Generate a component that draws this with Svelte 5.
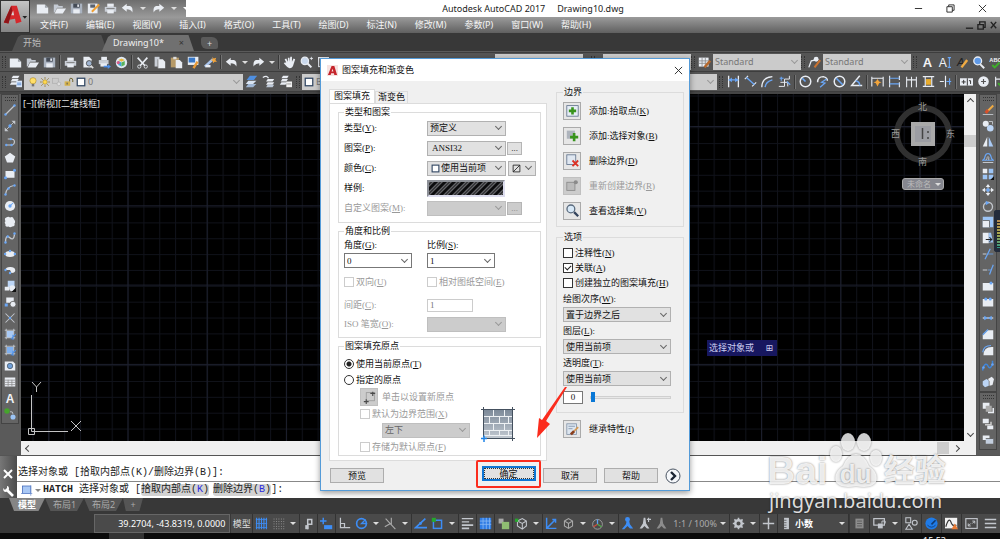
<script lang="ts">
    const W = "#e9edf3"
    const B = "#6aa6f5"
    const G = "#c3c7cd"
    const line = (d: string, c = G, w = 1.4) => `<path d="${d}" fill="none" stroke="${c}" stroke-width="${w}"/>`
    const fill = (d: string, c = W) => `<path d="${d}" fill="${c}"/>`
    const dot = (x: number, y: number, r = 1.6, c = B) => `<circle cx="${x}" cy="${y}" r="${r}" fill="${c}"/>`
    const rect = (x: number, y: number, w: number, h: number, c = W) => `<rect x="${x}" y="${y}" width="${w}" height="${h}" fill="${c}"/>`

    const icons: Record<string, string> = {
        new: fill("M1 3H11L15 7V14H1Z") + fill("M11 3V7H15Z", "#9ea3aa"),
        open: fill("M1 3H6L7 5H12V7H5L2 13H1Z", "#c5cbd4") + fill("M5 8H16L12 14H2Z"),
        save: fill("M1 2H15V14H1Z", "#aab3c0") + rect(4, 2, 8, 5, "#454c57") + rect(4, 9, 8, 5) + rect(9, 3, 2, 3),
        saveas: fill("M1 2H13V14H1Z") + rect(4, 3, 6, 4, "#596270") + line("M6 12L15 3", "#f0a032", 2.4),
        print: rect(4, 2, 8, 4) + fill("M1 6H15V12H1Z", "#c9ced6") + rect(4, 10, 8, 4) + line("M3 8H13", "#777", 1),
        preview: fill("M3 1H10L13 4V14H3Z") + `<circle cx="10" cy="9" r="3.4" fill="#9fb4d0" stroke="#444"/>` + line("M12 12L15 15", "#ddd", 2),
        publish: rect(4, 1, 7, 4) + fill("M1 5H13V10H1Z", "#c9ced6") + rect(3, 9, 8, 4) + line("M7 13H13", "#4d8fe8", 2) + fill("M12 10L16 13L12 16Z", "#4d8fe8"),
        cube: `<circle cx="8" cy="8" r="7" fill="#dfe8f2"/>` + fill("M8 3L12 5L8 7L4 5Z", "#e8b93f") + fill("M4 6L8 8V13L4 11Z", "#3fa7d8") + fill("M12 6L8 8V13L12 11Z", "#58b45a") + dot(4, 8, 2, "#d85c8a"),
        cut: line("M2 2L11 12M14 2L5 12", W, 2) + `<circle cx="4" cy="13" r="2" fill="none" stroke="${W}"/><circle cx="12" cy="13" r="2" fill="none" stroke="${W}"/>`,
        copy: fill("M2 1H8V13H2Z", "#c9ced6") + fill("M6 4H12L15 7V15H6Z") + line("M6 4V15", "#777", 1),
        paste: rect(1, 2, 10, 12, "#b69a68") + rect(4, 1, 4, 3, "#ddd") + fill("M7 5H12L15 8V15H7Z"),
        match: rect(1, 1, 13, 10) + rect(2, 2, 8, 6, "#3978c8") + line("M13 7L8 15", "#e79a37", 3),
        block: line("M1 13L11 4", "#a9c5ee", 3) + fill("M10 1L12 3L15 2L14 5L16 7L13 7L11 9L11 6L8 5L11 4Z", "#f3a53b") + rect(2, 11, 6, 3),
        undo: fill("M1 7L7 2V5H11Q15 6 14 13Q12 9 7 9V12Z"),
        redo: fill("M15 7L9 2V5H5Q1 6 2 13Q4 9 9 9V12Z"),
        hand: fill("M4 8L2 4L4 3L6 7V2H8V7L9 1H11L11 7L13 3L15 4L13 10Q12 15 8 15Q6 15 1 9L2 8Z"),
        zoom: `<circle cx="6" cy="6" r="4.5" fill="#c9d8ec" stroke="${W}" stroke-width="1.5"/>` + line("M9 9L14 14", W, 2.6) + line("M12 3H16M14 1V5", W, 1),
        window: `<rect x="2" y="2" width="12" height="11" fill="none" stroke="${W}" stroke-width="1.5"/>`,
        layers: fill("M5 1H13L11 4H3Z") + fill("M4 5H12L10 8H2Z") + fill("M3 9H11L9 12H1Z") + rect(9, 7, 7, 8, "#d8e6fa") + line("M10 10H15M10 12H15", "#4c80c8", 1),
        layer1: fill("M6 1H15L11 6H2Z", "#4f8fe0") + fill("M4 7H14L10 11H1Z", "#d9e4f2") + fill("M4 11H14L10 15H1Z", "#9fb6d4"),
        layer2: fill("M7 5H15L13 8H5Z") + fill("M7 9H15L13 12H5Z") + fill("M7 12H15L13 15H5Z", "#bcc7d6") + line("M1 3Q6 0 8 4", W, 1.6),
        layer3: fill("M5 1H12L10 4H3Z") + fill("M4 5H11L9 8H2Z") + fill("M3 9H10L8 12H1Z") + rect(9, 8, 7, 7, "#f2f2f2") + line("M10 11H15", "#888", 1),
        bulb: `<circle cx="8" cy="6" r="5" fill="#ffdf69" stroke="#a07a10" stroke-width=".8"/>` + rect(6, 11, 4, 4, "#777"),
        sun: `<circle cx="8" cy="8" r="3.6" fill="#ffd84f" stroke="#9d7a14" stroke-width=".8"/>` + line("M8 0V3M8 13V16M0 8H3M13 8H16M2 2L4.5 4.5M11.5 11.5L14 14M14 2L11.5 4.5M4.5 11.5L2 14", "#8b7331", 1.2),
        vpfreeze: `<rect x="1" y="2" width="9" height="8" fill="none" stroke="#aaa"/><circle cx="11" cy="11" r="3" fill="#ddd" stroke="#aaa"/>`,
        lock: rect(1, 7, 9, 7, "#d5b24c") + line("M9 7V4Q9 2 11 2Q14 2 14 5V8", "#6f6531", 1.6) + line("M5 9V12", "#555", 1.6),
        square: `<rect x="2" y="2" width="12" height="12" fill="#fff" stroke="#324763" stroke-width="2"/>`,
        tablestyle: rect(1, 2, 12, 11) + line("M1 6H13M1 9H13M5 2V13M9 2V13", "#888", 1) + line("M15 6L8 14", "#b5682c", 3),
        mlstyle: line("M1 14L4 6L9 5", W, 1.6) + dot(10, 4, 3, W) + line("M15 5L8 14", "#c9722f", 2.6),
        bigA: `<text x="8" y="14" text-anchor="middle" font-family="Liberation Sans" font-weight="700" font-size="16" fill="#f1f3f6">A</text>`,
        textI: `<text x="6" y="14" text-anchor="middle" font-family="Liberation Sans" font-size="15" fill="#f1f3f6">A</text>` + line("M12 2H16M14 2V14M12 14H16", B),
        textEdit: `<text x="7" y="12" text-anchor="middle" font-family="Liberation Sans" font-style="italic" font-size="14" fill="#222">A</text>` + line("M15 5L8 14", "#f0ab43", 3),
        find: `<circle cx="7" cy="6" r="4.8" fill="#5f9ae8" stroke="${W}" stroke-width="1.6"/>` + line("M10 10L15 15", W, 2.4),
        abc: `<text x="8" y="7" text-anchor="middle" font-family="Liberation Sans" font-weight="700" font-size="7" fill="#f1f3f6">ABC</text>` + line("M4 11L7 14L13 8", "#3fae29", 2.4),
        dimlin: line("M2 1V15M14 1V15", W, 1.6) + line("M2 6H14", B, 1.6) + fill("M2 6L6 3V9ZM14 6L10 3V9Z", B),
        dimali: line("M1 5L5 1M10 14L15 9", W) + line("M3 3L13 12", B, 1.8),
        dimarc: line("M1 15Q1 3 14 2", W, 1.6) + line("M5 15Q6 8 14 6", B, 1.8),
        dimord: line("M1 14H8V5H14V1M3 9H12V14", W, 1.2) + line("M4 2V7M2 4H7M11 8L15 12", B, 1.4),
        dimrad: `<circle cx="8" cy="8" r="6.5" fill="none" stroke="${W}" stroke-width="1.8"/>` + line("M4 4L8 8", B, 2),
        dimjog: line("M2 9Q2 2 9 2Q14 3 14 7", W, 1.8) + line("M13 5L7 9L11 10L5 15", B, 1.6),
        dimdia: `<circle cx="8" cy="8" r="6.5" fill="none" stroke="${W}" stroke-width="1.8"/>` + line("M4 4L12 12", B, 2),
        dimang: line("M12 1L2 13H15", W, 1.8) + line("M7 7Q12 8 12 13", B, 1.8),
        qdim: line("M1 2V14M15 2V14M1 4H15", W, 1.4) + fill("M8 5L10 8L13 9L10 10L8 14L6 10L3 9L6 8Z", "#f3a53b"),
        dimbase: line("M2 1V15M14 1V6M14 9V15", W, 1.4) + line("M2 4H14M2 11H14", B, 1.5),
        dimcont: line("M2 2V15M8 2V15M14 2V15M2 6H14", W, 1.3),
        dimspace: line("M1 2H15M1 14H15M4 2V14M12 2V14", W, 1.4) + rect(5, 5, 6, 7, "#e9ad2d"),
        dimbreak: line("M8 1V15M1 8H6", W, 1.4) + line("M9 8H15M13 4V12", B, 1.4),
        tol: rect(0, 4, 16, 9) + line("M2 8.500H7M4.500 6V11M9 4V13M11 7H13V11", "#333", 1.2),
        center: `<circle cx="8" cy="8" r="6.5" fill="${W}"/>` + line("M8 5V11M5 8H11", "#555", 1.4),
        check: line("M2 2V14M2 5H12", W) + line("M5 10L8 13L14 7", "#3fae29", 2.2),
        line: line("M2 14L14 2", G, 1.6) + dot(2, 14) + dot(14, 2),
        xline: line("M2 14L14 2", G, 1.2) + dot(8, 8, 2.2) + fill("M10 1H15V6ZM1 10V15H6Z", G),
        pline: line("M3 12H11Q14 11 14 8Q14 4 9 4H5", G, 1.6) + dot(3, 12) + dot(10, 12) + dot(9, 4),
        polygon: fill("M8 1L15 6L12 14H4L1 6Z"),
        rectang: rect(2, 4, 12, 9) + dot(2, 13, 2) + dot(14, 3, 2),
        arc: line("M2 14Q3 4 13 2", G, 1.6) + dot(2, 14) + dot(6, 6) + dot(14, 2),
        circle: `<circle cx="8" cy="8" r="6.8" fill="${W}"/>` + dot(8, 8, 2.2) + line("M8 8L12 4", B),
        revcloud: `<path d="M3 2Q6 0 8 2Q12 0 13 4Q16 7 14 10Q15 14 11 14Q8 16 6 14Q1 15 2 11Q0 8 2 7Q0 3 3 2Z" fill="${W}"/>`,
        spline: line("M2 14Q2 3 7 7Q13 13 14 3", G, 1.8) + dot(2, 14) + dot(5, 6) + dot(14, 2),
        ellipse: `<ellipse cx="8" cy="8" rx="6.5" ry="4" fill="${W}"/>` + dot(1.5, 8) + dot(14.5, 8) + dot(8, 4),
        elarc: `<path d="M2 8A6.500 4 0 1 1 10 12L8 8Z" fill="${W}"/>` + dot(2, 8) + dot(8, 12),
        insert: rect(5, 1, 9, 9, "#bcd5f5") + `<circle cx="11" cy="11" r="4" fill="${W}"/>` + rect(1, 9, 6, 5) + fill("M16 10V16H10Z", "#111"),
        makeblock: rect(3, 2, 10, 7) + `<circle cx="12" cy="11" r="4" fill="${W}" stroke="#555"/>` + rect(1, 10, 4, 4, B),
        point: line("M2 2L14 14M14 2L2 14", G, 1.4) + dot(8, 8, 1.6),
        hatch: rect(4, 4, 9, 9, "#a9caf5") + line("M3 1V15M1 3H15M13 1V15M1 13H15", G, 1.2) + line("M9 15L16 8M12 9V16", "#4c8fe8", 1.4),
        gradient: rect(4, 4, 9, 9, "#7fb0ef") + line("M3 1V15M1 3H15M13 1V15M1 13H15", G, 1.2) + line("M9 15L16 8M12 9V16", "#4c8fe8", 1.4),
        region: fill("M1 2H12L15 5V14H1Z") + `<circle cx="8" cy="8" r="3.6" fill="#6f9fd8" stroke="#456"/>`,
        table: rect(1, 2, 14, 12) + line("M1 5.500H15M1 8.500H15M1 11.500H15M5.500 5V14M10.500 5V14", "#888", 1),
        addsel: dot(4, 4, 3.6, "#45a52c") + dot(12, 12, 3.4, "#9cc4f5") + line("M8 5Q12 4 12 8", G, 1.2),
        erase: line("M15 2L8 9", "#f0ab43", 2.6) + line("M8 8L5 12", "#d6502b", 4) + line("M1 14H15", G, 1.2),
        copyobj: dot(5, 5, 4, W) + dot(11, 11, 4.4, "#bcd5f5") + line("M9 2H14V6", G, 1.2),
        mirror: fill("M7 1V14H1Z") + fill("M9 1V14H15Z", "#a9caf5"),
        offset: line("M1 14H15", G) + line("M1 11Q4 9 4 6Q5 2 8 2Q11 2 12 6Q12 9 15 11Z", B, 1.6) + line("M5 11Q7 9 7 7Q8 5 9 7V11", G, 1.2),
        array: rect(1, 1, 6, 6) + rect(9, 1, 6, 6, "#9cc4f5") + rect(1, 9, 6, 6, "#9cc4f5") + rect(9, 9, 6, 6, "#9cc4f5") + fill("M16 11V16H11Z", "#111"),
        move: line("M8 2V14M2 8H14", G, 1.6) + fill("M8 0L11 4H5ZM8 16L5 12H11ZM0 8L4 5V11ZM16 8L12 5V11Z") + rect(6, 6, 4, 4, B),
        rotate: `<circle cx="8" cy="9" r="6" fill="none" stroke="${G}" stroke-width="1.8"/>` + fill("M5 1L10 4L5 7Z", B),
        scale: rect(1, 1, 14, 14, "#9cc4f5") + rect(1, 6, 9, 9) + line("M1 6H10V15", "#555", 1),
        stretch: rect(1, 1, 8, 14) + fill("M9 1H12L15 14H9Z", "#9cc4f5") + line("M5 10H13M10 7L13 10L10 13", "#222", 1.4),
        trim: line("M1 8H6", G) + line("M8 8H15", B, 1) + line("M4 15L11 1", B, 1.6),
        extend: line("M1 8H7", G) + line("M8 8H12", B, 1) + line("M10 14L15 1", B, 1.6),
        breakpt: rect(1, 4, 14, 10) + dot(12, 4, 2),
        brk: rect(1, 4, 14, 10) + dot(5, 4, 2) + dot(11, 4, 2),
        join: line("M1 8H15", G, 2) + fill("M3 5L8 8L3 11ZM13 5L8 8L13 11Z", B),
        chamfer: fill("M1 15V10L8 3H15V15Z") + line("M1 9L8 2", B, 1.6),
        fillet: fill("M2 15Q2 4 13 4H15V15Z") + line("M1 11Q2 2 12 2", B, 1.6),
        blend: line("M1 14V11Q5 2 8 8Q11 14 14 5V1", "#3f86dc", 2) + dot(2, 10) + dot(14, 6),
        explode: fill("M1 7L6 4L9 6V13L4 15L1 12Z", "#bcd5f5") + fill("M8 4L13 1L16 4L14 12L10 13V7Z"),
        order1: rect(1, 1, 9, 8) + rect(5, 5, 8, 8, "#aaa") + line("M8 14H15V8", W, 2),
        order2: rect(1, 1, 8, 6) + rect(7, 10, 8, 5) + line("M4 9H12V5", "#ccc", 2),
        order3: rect(1, 2, 9, 6) + rect(5, 6, 10, 7, "#c3cede") + line("M5 6H15", "#555", 1),
        grid: line("M2 1V15M5 1V15M8 1V15M11 1V15M14 1V15", "#3d8df5", 1.4) + line("M1 3H15M1 8H15M1 13H15", "#3d8df5", 1),
        snap: [2, 5, 8, 11, 14].map(x => [2, 5, 8, 11, 14].map(y => rect(x, y, 1, 1, "#aaa")).join("")).join(""),
        infer: line("M7 15V3H12V9H7", G, 1.8) + rect(4, 10, 4, 5, G),
        dyn: line("M4 1V9M0 5H8", "#3d8df5", 1.8) + rect(5, 10, 10, 5, "#3d8df5"),
        ortho: line("M3 1V13H15M3 8H8V13", G, 1.5),
        polar: `<circle cx="8" cy="8" r="6" fill="none" stroke="#3d8df5" stroke-width="2"/>` + line("M15 8H8L13 3", "#3d8df5", 1.6),
        iso: line("M2 2L14 15M9 1V9M1 12L8 8", "#aaa", 1.4),
        otrack: line("M14 2L2 13H16", "#3d8df5", 2) + dot(8, 8, 1.8, "#3d8df5"),
        osnap: `<rect x="3" y="4" width="10" height="10" fill="none" stroke="#3d8df5" stroke-width="1.8"/>` + rect(1, 1, 5, 5, "#25a72c"),
        lwt: line("M1 2H15M1 6H10", G, 1.8) + line("M1 10H15M1 14H10", G, 2.4),
        transp: rect(1, 1, 14, 14, "#2f7de5") + line("M1 5H15M1 9H15M5 1V15M9 1V15M13 1V15", "#88b7f3", 1),
        selcyc: rect(2, 2, 6, 6, "#a9a9a9") + rect(6, 6, 9, 9, "#8fbd72"),
        osnap3: line("M3 5L9 2L14 5V11L9 15L3 11ZM3 5L9 8L14 5M9 8V15", G, 1.3) + rect(0, 2, 4, 4, "#25a72c"),
        ucs: line("M2 1V14H14M2 14L12 4M9 3H13V7", "#3d8df5", 1.8),
        filter: line("M3 5L8 2L13 5V11L8 14L3 11ZM3 5L8 8L13 5M8 8V14", "#aaa", 1.3),
        gizmo: `<circle cx="8" cy="9" r="6" fill="none" stroke="#aaa"/>` + line("M8 9V3", "#5aa0f5", 1.6) + line("M8 9L3 12", "#d04c3c", 1.6) + line("M8 9L13 12", "#4fae45", 1.6),
        anno: fill("M7 5L10 5L11 9L15 14H11L8 11L4 15H1L6 9Z", "#3d8df5") + dot(8, 3, 3, "#3d8df5"),
        annoadd: fill("M7 1H9L10 8L14 14H11L8 11L5 14H2L6 8Z", G) + line("M11 3H16M13 1V6", G),
        annoscale: fill("M7 1H9L10 8L14 14H11L8 11L5 14H2L6 8Z", "#8c8c8c"),
        gear: `<circle cx="8" cy="8" r="4" fill="none" stroke="${G}" stroke-width="3"/>` + line("M8 1V4M8 12V15M1 8H4M12 8H15M3 3L5 5M11 11L13 13M13 3L11 5M5 11L3 13", G, 2),
        plus: line("M8 1V15M1 8H15", G, 1.8),
        units: rect(5, 1, 6, 14, G) + line("M5 4H8M5 7H8M5 10H8M5 13H8", "#555", 1),
        calc: rect(3, 2, 10, 12, "#8c8c8c") + line("M5 5H11M5 8H11M5 11H11", "#555", 1),
        uilock: `<rect x="1" y="2" width="13" height="8" fill="none" stroke="${G}" stroke-width="1.5"/>` + rect(6, 8, 6, 6, G) + line("M11 8V5H15V8", G, 1.2),
        isolate: line("M1 1H7V7H1ZM5 9L9 15H1Z", G, 1.3) + `<circle cx="12" cy="7" r="3" fill="none" stroke="${G}" stroke-width="1.4"/>`,
        perf: dot(8, 8, 7.5, "#1f7be8") + line("M8 9L13 4", "#103a70", 2) + line("M3 10Q8 15 13 10", "#103a70", 1),
        monitor: rect(0, 1, 15, 13, "#f2f2f2") + line("M1 12Q5 -2 8 8Q10 12 14 10", "#333", 1.4) + fill("M12 8L16 15H8Z", "#e87b35"),
        full: `<rect x="1" y="2" width="14" height="12" fill="none" stroke="${G}" stroke-width="1.4"/>` + line("M4 11L7 8M12 5L9 8M9 5H12V8M4 8V11H7", G, 1.2),
        menu: line("M1 3H15M1 8H15M1 13H15", G, 1.8),
        pick: `<rect x="1" y="2" width="14" height="13" fill="#e6edf6" stroke="#5d6f88"/>` + line("M8 4V13M3.500 8.500H12.500", "#38941c", 3.2),
        addobj: rect(1, 2, 10, 10, "#aeb4bd") + line("M10 5V15M5 10H15", "#38941c", 3.2),
        remove: `<rect x="1" y="1" width="11" height="12" fill="#dfe7f1" stroke="#5d6f88"/>` + line("M8 8L15 15M15 8L8 15", "#dd3124", 2.2),
        recreate: `<rect x="1" y="4" width="10" height="10" fill="#bbb" stroke="#888"/>` + dot(12, 4, 2.6, "#8b8b8b"),
        view: `<circle cx="6" cy="6" r="4.8" fill="#d7e8f7" stroke="#596a7d" stroke-width="1.6"/>` + line("M10 10L15 15", "#33435c", 2.8),
        inherit: `<rect x="1" y="1" width="12" height="13" fill="#dde6f0" stroke="#8191a6"/>` + line("M3 4H11M3 7H8", "#7b8fa8", 1) + line("M15 5L10 10", "#d59a54", 2) + line("M10 10L6 14", "#8a3e1c", 3.4),
        origin: `<rect x="4" y="2" width="10" height="10" fill="none" stroke="#999"/>` + line("M1 13H7M4 10V16M12 1V6M9 3H15", "#4a4a4a", 1.4),
        hatchcmd: `<rect x="2" y="2" width="11" height="10" fill="#a9c8f5" stroke="#3e66b8"/>` + line("M0 12H15M13 1V15", "#6d8fd0", 1),
    }

    const menus = ["文件(F)", "编辑(E)", "视图(V)", "插入(I)", "格式(O)", "工具(T)", "绘图(D)", "标注(N)", "修改(M)", "参数(P)", "窗口(W)", "帮助(H)"]
    const quick = "new open save saveas print undo v redo v".split(" ")
    const standard = "new open save | print preview publish cube | cut copy paste match block | undo v redo v | hand zoom window".split(" ")
    const dims = "dimlin dimali dimarc dimord | dimrad dimjog dimdia dimang | qdim dimbase dimcont dimspace dimbreak | tol center check".split(" ")
    const draw = "line xline pline polygon rectang arc circle revcloud spline ellipse elarc insert makeblock point hatch gradient region table bigA addsel".split(" ")
    const modify = "erase copyobj mirror offset array move rotate scale stretch trim extend breakpt brk join chamfer fillet blend explode".split(" ")
    const status1 = "grid snap v | infer | dyn | ortho polar v iso v | otrack osnap v | lwt | transp | selcyc | osnap3 v | ucs filter v gizmo v | anno annoadd annoscale".split(" ")
    const status2 = "calc | uilock v | isolate | perf | monitor | full menu".split(" ")

    let tab = $state("hatch")
    let origin = $state("current")
    let associative = $state(true)
    let opacity = $state(0)
</script>

{#snippet icon(name: string)}
    <svg class="icon" viewBox="0 0 16 16" aria-hidden="true">{@html icons[name]}</svg>
{/snippet}

{#snippet tools(names: string[])}
    {#each names as name}
        {#if name === "|"}
            <span class="sep"></span>
        {:else if name === "v"}
            <span class="caret"></span>
        {:else}
            <button class="tool" aria-label={name}>{@render icon(name)}</button>
        {/if}
    {/each}
{/snippet}

{#snippet combo(id: string, value: string, disabled = false)}
    <span class="combo" class:disabled>
        <select {id} {disabled} aria-label={id}><option>{value}</option></select>
    </span>
{/snippet}

{#snippet key(text: string, letter: string, end = "")}
    {text}(<u>{letter}</u>){end}
{/snippet}

<div class="app">
    <header>
        <button class="logo" aria-label="AutoCAD">
            <svg viewBox="0 0 30 30">
                <path d="M3 21L11 3H17L22 20L16 22L15 17L9 18L8 22Z" fill="#d5282c" />
                <path d="M3 21L11 3L12 8L8 22Z" fill="#8f1418" />
                <path d="M11 13L13 8L14 13Z" fill="#d8d8d8" />
                <path d="M23 14H28L25.500 17Z" fill="#222" />
            </svg>
        </button>
        <div class="titlebar">
            <div class="quick">
                {@render tools(quick)}
                <span class="caret bar"></span>
            </div>
            <span class="apptitle"><span>Autodesk AutoCAD 2017</span><span>Drawing10.dwg</span></span>
            <div class="winbuttons">
                <button aria-label="minimize"><svg viewBox="0 0 10 10"><path d="M1 5H9" /></svg></button>
                <button aria-label="restore"><svg viewBox="0 0 10 10"><path d="M1 3H7V9H1ZM3 3V1H9V7H7" /></svg></button>
                <button aria-label="close"><svg viewBox="0 0 10 10"><path d="M1 1L9 9M9 1L1 9" /></svg></button>
            </div>
        </div>
        <nav>
            {#each menus as menu}
                <a href="#menu">{menu}</a>
            {/each}
            <div class="docbuttons">
                <button aria-label="minimize drawing"><svg viewBox="0 0 10 10"><path d="M1 8H9" /></svg></button>
                <button aria-label="restore drawing"><svg viewBox="0 0 10 10"><path d="M1 4H7V9H1ZM3 4V1H9V7H7" /></svg></button>
                <button aria-label="close drawing"><svg viewBox="0 0 10 10"><path d="M2 1L8 8M8 1L2 8" /></svg></button>
            </div>
        </nav>
    </header>

    <div class="filetabs">
        <button class="filetab">开始</button>
        <button class="filetab current">Drawing10* <i>×</i></button>
        <button class="addtab">+</button>
    </div>

    <div class="toolbar">
        <span class="grip"></span>
        {@render tools(standard)}
        <span class="space"></span>
        <span class="pale w88">{@render combo("textstyle", "Standard")}</span>
        <span class="grip wide"></span>
        <span class="pale w88">{@render combo("dimstyle", "Standard")}</span>
        <span class="grip"></span>
        {@render tools(["tablestyle"])}
        <span class="pale w88">{@render combo("tablestyle", "Standard")}</span>
        <span class="grip"></span>
        {@render tools(["mlstyle"])}
        <span class="pale w88 indent">{@render combo("mleaderstyle", "Standard")}</span>
        <span class="grip mid"></span>
        {@render tools(["bigA", "textI", "textEdit", "find", "abc"])}
    </div>

    <div class="toolbar">
        <span class="grip"></span>
        {@render tools(["layers"])}
        <span class="pale layer">
            {@render icon("bulb")}{@render icon("sun")}{@render icon("vpfreeze")}{@render icon("lock")}{@render icon("square")}
            {@render combo("layer", "0")}
        </span>
        {@render tools(["layer1", "layer2", "layer3"])}
        <span class="grip mid"></span>
        <span class="pale space">
            {@render icon("square")}
            {@render combo("color", "ByLayer")}
        </span>
        <span class="grip mid"></span>
        {@render tools(dims)}
    </div>

    <main>
        <aside>
            <div class="palette">
                <span class="hgrip"></span>
                {@render tools(draw)}
            </div>
        </aside>
        <div class="viewport">
            <div class="canvas">
                <svg class="gridlines" aria-hidden="true">
                    <defs>
                        <pattern id="minor" width="15.84" height="15.86" patternUnits="userSpaceOnUse" x="11.5" y="1.5">
                            <path d="M0 0.500H16M0.500 0V16" stroke="#10121a" fill="none" />
                        </pattern>
                        <pattern id="major" width="79.2" height="79.3" patternUnits="userSpaceOnUse" x="27.3" y="32">
                            <path d="M0 0.500H80M0.500 0V80" stroke="#1c1f2d" fill="none" />
                        </pattern>
                    </defs>
                    <rect width="100%" height="100%" fill="url(#minor)" />
                    <rect width="100%" height="100%" fill="url(#major)" />
                </svg>
                <span class="viewlabel">[−][俯视][二维线框]</span>
                <svg class="ucsicon" viewBox="0 0 56 56" aria-hidden="true">
                    <path d="M4.500 14V50.500H41M1.500 47.500H7.500V53.500H1.500ZM5 1L9.500 6L14 1M9.500 6V11M44 40L54 50M54 40L44 50" fill="none" stroke="#c4c4c4" />
                </svg>
                <div class="viewcube">
                    <svg viewBox="0 0 70 70" aria-hidden="true">
                        <circle cx="35" cy="35" r="26" fill="none" stroke="#303030" stroke-width="6" />
                        <rect x="23" y="23" width="24" height="24" fill="#a9a9a9" />
                        <rect x="27" y="27" width="16" height="16" fill="#9c9da3" />
                        <path d="M34.500 29V40M39 33H41M39 39H41" stroke="#444" stroke-width="1.5" />
                    </svg>
                    <span class="n">北</span><span class="s">南</span><span class="w">西</span><span class="e">东</span>
                </div>
                <button class="ucsname">未命名 <span class="caret"></span></button>
                <div class="prompt">选择对象或 <i>⊞</i></div>
            </div>
            <div class="vscroll"><span class="up"></span><b></b><span class="down"></span></div>
            <div class="hscroll"><span class="left"></span><b></b><span class="right"></span></div>
        </div>
        <aside class="rightside">
            <div class="palette">
                <span class="hgrip"></span>
                {@render tools(modify)}
            </div>
            <div class="palette">
                <span class="hgrip"></span>
                {@render tools(["order1", "order2", "order3"])}
            </div>
            <span class="meter"></span>
        </aside>
    </main>

    <section class="command">
        <div class="cmdside">
            <button aria-label="close command line"><svg viewBox="0 0 12 12"><path d="M2 2L10 10M10 2L2 10" stroke="#fff" stroke-width="2" /></svg></button>
            <button aria-label="customize"><svg viewBox="0 0 12 12"><path d="M4 4L11 11" stroke="#fff" stroke-width="2.6" /><path d="M1 3L3 5L5 4L5 1Q7 1 7 4Q6 7 3 7Q1 6 1 3Z" fill="#fff" /></svg></button>
        </div>
        <div class="cmdlines">
            <p>选择对象或 [拾取内部点(K)/删除边界(B)]:</p>
            <p class="active">{@render icon("hatchcmd")}<span class="caret"></span><b>HATCH</b> 选择对象或 [<mark>拾取内部点(<em>K</em>)</mark><mark>删除边界(<em>B</em>)</mark>]:</p>
        </div>
    </section>

    <div class="layouts">
        <button class="current">模型</button>
        <button>布局1</button>
        <button>布局2</button>
        <button class="add">+</button>
    </div>

    <footer>
        <span class="coords">39.2704, -43.8319, 0.0000</span>
        <div class="tray">
            <button class="model">模型</button>
            <span class="sep"></span>
            {@render tools(status1)}
            <span class="dim">1:1 / 100%</span><span class="caret"></span><span class="sep"></span>
            {@render tools(["gear", "v", "|", "plus", "|", "units"])}
            <span class="unit">小数</span><span class="caret"></span><span class="sep"></span>
        </div>
        <div class="tray end">{@render tools(status2)}</div>
    </footer>
    <div class="taskbar"><b></b><span>15:53</span></div>

    <div class="dialog" role="dialog" aria-label="图案填充和渐变色">
        <div class="dlgtitle">
            <svg viewBox="0 0 12 12"><rect width="12" height="12" fill="#f6e3e1" /><path d="M1 11L5 1H8L11 11H8L7.500 9H4.500L4 11ZM5 7H7L6 4Z" fill="#c5242b" /></svg>
            <span>图案填充和渐变色</span>
            <button aria-label="close dialog"><svg viewBox="0 0 10 10"><path d="M1 1L9 9M9 1L1 9" /></svg></button>
        </div>

        <div class="columns">
            <div class="hatch">
                <div class="tabs">
                    <button class:selected={tab === "hatch"} onclick={() => tab = "hatch"}>图案填充</button>
                    <button class:selected={tab === "gradient"} onclick={() => tab = "gradient"}>渐变色</button>
                </div>
                <div class="page">
                    <fieldset class="pattern">
                        <legend>类型和图案</legend>
                        <label for="type">{@render key("类型", "Y", ":")}</label>
                        {@render combo("type", "预定义")}
                        <label for="name">{@render key("图案", "P", ":")}</label>
                        <div class="name">{@render combo("name", "ANSI32")}</div>
                        <button class="more">...</button>
                        <label for="hatchcolor">{@render key("颜色", "C", ":")}</label>
                        <div class="colour">{@render icon("square")}{@render combo("hatchcolor", "使用当前项")}</div>
                        <div class="background">
                            <svg class="icon" viewBox="0 0 16 16"><path d="M2 2H14V14H2ZM2 14L14 2" fill="none" stroke="#222" stroke-width="1.500" /></svg>
                            {@render combo("background", "")}
                        </div>
                        <span>样例:</span>
                        <svg class="swatch">
                            <defs>
                                <pattern id="ansi" width="9" height="14" patternUnits="userSpaceOnUse" patternTransform="skewX(-45)">
                                    <path d="M1 0V14M4 0V14" stroke="#b9bcc2" />
                                </pattern>
                            </defs>
                            <rect width="100%" height="100%" fill="#0b0b0d" />
                            <rect width="100%" height="100%" fill="url(#ansi)" />
                        </svg>
                        <label for="custom" class="off">{@render key("自定义图案", "M", ":")}</label>
                        {@render combo("custom", "", true)}
                        <button class="more" disabled>...</button>
                    </fieldset>

                    <fieldset class="angle">
                        <legend>角度和比例</legend>
                        <label for="angle">{@render key("角度", "G", ":")}</label>
                        <label for="scale">{@render key("比例", "S", ":")}</label>
                        <div class="edit">{@render combo("angle", "0")}</div>
                        <div class="edit">{@render combo("scale", "1")}</div>
                        <label class="off"><input type="checkbox" disabled />{@render key("双向", "U")}</label>
                        <label class="off"><input type="checkbox" disabled />{@render key("相对图纸空间", "E")}</label>
                        <label for="spacing" class="off">{@render key("间距", "C", ":")}</label>
                        <input id="spacing" type="text" value="1" disabled />
                        <label for="iso" class="off">{@render key("ISO 笔宽", "O", ":")}</label>
                        {@render combo("iso", "", true)}
                    </fieldset>

                    <fieldset class="origin">
                        <legend>图案填充原点</legend>
                        <div class="choices">
                            <label><input type="radio" name="origin" value="current" bind:group={origin} />{@render key("使用当前原点", "T")}</label>
                            <label><input type="radio" name="origin" value="specified" bind:group={origin} />指定的原点</label>
                            <div class="setorigin off"><button disabled aria-label="origin">{@render icon("origin")}</button>单击以设置新原点</div>
                            <label class="off in1"><input type="checkbox" disabled />{@render key("默认为边界范围", "X")}</label>
                            <div class="in2">{@render combo("extent", "左下", true)}</div>
                            <label class="off in1"><input type="checkbox" disabled />{@render key("存储为默认原点", "F")}</label>
                        </div>
                        <svg class="bricks" viewBox="0 0 34 36" aria-hidden="true">
                            <defs>
                                <linearGradient id="brick" x2="0" y2="1">
                                    <stop stop-color="#7d8a99" />
                                    <stop offset="1" stop-color="#c3cad2" />
                                </linearGradient>
                            </defs>
                            <rect x="3" y="3" width="28" height="29" fill="url(#brick)" />
                            <path d="M3 9.500H31M3 16.500H31M3 23.500H31M3 28.500H31M12.500 3V9M23.500 3V9M8.500 10V16M18.500 10V16M27.500 10V16M12.500 17V23M23.500 17V23M8.500 24V28M18.500 24V28M27.500 24V28" stroke="#eef1f4" fill="none" />
                            <path d="M0 2.500H34M2.500 0V30M31.500 0V34M6 31.500H34" stroke="#44505e" fill="none" />
                            <path d="M0 31.500H6M3 28.500V35" stroke="#1e84e8" stroke-width="1.500" />
                        </svg>
                    </fieldset>
                </div>
            </div>

            <div class="side">
                <fieldset class="bounds">
                    <legend>边界</legend>
                    <div><button aria-label="pick points">{@render icon("pick")}</button><span>{@render key("添加:拾取点", "K")}</span></div>
                    <div><button aria-label="select objects">{@render icon("addobj")}</button><span>{@render key("添加:选择对象", "B")}</span></div>
                    <div><button aria-label="remove boundaries">{@render icon("remove")}</button><span>{@render key("删除边界", "D")}</span></div>
                    <div class="off"><button aria-label="recreate boundary" disabled>{@render icon("recreate")}</button><span>{@render key("重新创建边界", "R")}</span></div>
                    <div><button aria-label="view selections">{@render icon("view")}</button><span>{@render key("查看选择集", "V")}</span></div>
                </fieldset>

                <fieldset class="options">
                    <legend>选项</legend>
                    <label><input type="checkbox" />{@render key("注释性", "N")}</label>
                    <label><input type="checkbox" bind:checked={associative} />{@render key("关联", "A")}</label>
                    <label><input type="checkbox" />{@render key("创建独立的图案填充", "H")}</label>
                    <label class="over" for="order">{@render key("绘图次序", "W", ":")}</label>
                    {@render combo("order", "置于边界之后")}
                    <label class="over" for="hatchlayer">{@render key("图层", "L", ":")}</label>
                    {@render combo("hatchlayer", "使用当前项")}
                    <label class="over" for="transparency">{@render key("透明度", "T", ":")}</label>
                    {@render combo("transparency", "使用当前项")}
                    <div class="slider">
                        <input type="text" bind:value={opacity} aria-label="透明度" />
                        <input type="range" min="0" max="90" bind:value={opacity} aria-label="透明度" />
                    </div>
                </fieldset>

                <div class="inherit"><button aria-label="inherit properties">{@render icon("inherit")}</button><span>{@render key("继承特性", "I")}</span></div>
            </div>
        </div>

        <div class="actions">
            <button>预览</button>
            <span class="highlight"><button class="ok">确定</button></span>
            <button>取消</button>
            <button>帮助</button>
            <button class="expand" aria-label="more options"><svg viewBox="0 0 16 16"><circle cx="8" cy="8" r="7" fill="#f5f7fa" stroke="#4b5563" /><path d="M6 4L10 8L6 12" fill="none" stroke="#1b2533" stroke-width="2.400" /></svg></button>
        </div>
        <svg class="pointer" viewBox="0 0 32 52" aria-hidden="true"><path d="M31 0L10 34L14 37L1 51L3 31L6 33L29 0Z" fill="#fb2c1d" /></svg>
    </div>

    <div class="watermark" aria-hidden="true">
        <svg viewBox="0 0 56 58">
            <ellipse cx="19" cy="11" rx="7" ry="9" /><ellipse cx="35" cy="11" rx="7" ry="9" />
            <ellipse cx="7" cy="23" rx="6" ry="8" /><ellipse cx="47" cy="27" rx="6" ry="8" />
            <path d="M27 23Q35 23 40 35Q50 42 47 51Q42 58 27 55Q12 58 7 51Q4 42 14 35Q19 23 27 23Z" />
        </svg>
        <div class="brand"><span>Bai</span><span class="du">du</span><span class="jy">经验</span></div>
        <div class="site">jingyan.baidu.com</div>
    </div>
</div>

<style>
    :global(body) {
        margin: 0;
        overflow: hidden;
    }

    .app {
        position: relative;
        display: flex;
        flex-direction: column;
        height: 100vh;
        overflow: hidden;
        background: #5a5a5a;
        color: #ddd;
        font: 9px/12px "Noto Sans", "Noto Sans CJK SC", sans-serif;
        white-space: nowrap;
    }

    button, select, input {
        font: inherit;
        color: inherit;
        margin: 0;
        padding: 0;
        box-sizing: border-box;
    }

    button {
        border: 0;
        background: none;
    }

    .icon {
        width: 13px;
        height: 13px;
        flex: none;
    }

    .tool {
        display: flex;
        align-items: center;
        justify-content: center;
        flex: none;
        width: 17px;
        height: 16px;
    }

    .sep {
        flex: none;
        width: 1px;
        height: 14px;
        margin: 0 1px;
        background: #393939;
        border-right: 1px solid #737373;
    }

    .caret {
        flex: none;
        width: 5px;
        margin: 0 2px;
        border: solid transparent;
        border-width: 3px 3px 0;
        border-top-color: #ddd;
        box-sizing: border-box;
        height: 3px;
    }

    header {
        display: grid;
        grid-template: 17px 16px / 30px 1fr;
        background: #666;
    }

    .logo {
        grid-row: 1 / 3;
        background: linear-gradient(#c4c4c4, #858585);
        border: 1px solid #333;
    }

    .logo svg {
        display: block;
        width: 28px;
        height: 28px;
    }

    .titlebar {
        display: flex;
        background: #fff;
        color: #222;
    }

    .quick {
        display: flex;
        align-items: center;
        width: 156px;
        padding-left: 4px;
        box-sizing: border-box;
        background: linear-gradient(#6d6d6d, #999);
    }

    .quick .caret {
        margin: 0 4px;
    }

    .quick .bar {
        margin: 0 2px;
        border-top-color: #fff;
    }

    .apptitle {
        display: flex;
        flex: 1;
        justify-content: center;
        gap: 12px;
        padding-right: 34px;
        line-height: 17px;
    }

    .winbuttons, .docbuttons {
        display: flex;
        align-items: center;
        gap: 23px;
        padding-right: 13px;
    }

    .docbuttons {
        gap: 3px;
        padding-right: 2px;
        margin-left: auto;
    }

    .winbuttons svg, .docbuttons svg, .dlgtitle button svg {
        display: block;
        width: 9px;
        height: 9px;
        fill: none;
        stroke: #222;
    }

    .docbuttons svg {
        stroke-width: 1.5;
    }

    nav {
        display: flex;
        gap: 18px;
        padding-left: 10px;
        line-height: 16px;
        background: linear-gradient(#9b9b9b, #606060);
    }

    nav a {
        color: #f5f5f5;
        text-decoration: none;
    }

    .filetabs {
        display: flex;
        align-items: flex-end;
        height: 18px;
        padding-left: 12px;
        background: #383838;
        border-bottom: 1px solid #5a5a5a;
    }

    .filetab {
        width: 95px;
        height: 16px;
        padding-left: 11px;
        text-align: left;
        color: #bbb;
        background: #505050;
        clip-path: polygon(0 100%, 6px 12%, 9px 0, 94% 0, 100% 100%);
    }

    .filetab.current {
        display: flex;
        justify-content: space-between;
        align-items: center;
        width: 92px;
        margin-left: -5px;
        padding-right: 10px;
        color: #f1f1f1;
        background: #707070;
    }

    .filetab i {
        font-style: normal;
        color: #333;
    }

    .addtab {
        width: 17px;
        height: 12px;
        margin: 0 0 2px 7px;
        border-radius: 2px 6px 2px 6px;
        background: #5a5a5a;
        line-height: 11px;
    }

    .toolbar {
        display: flex;
        align-items: center;
        width: calc(100% + 4px);
        height: 20px;
        padding-left: 2px;
        box-sizing: border-box;
        background: #555;
        border: solid #3d3d3d;
        border-width: 1px 0;
    }

    .toolbar + .toolbar {
        width: calc(100% + 9px);
        border-top: 0;
    }

    .grip {
        flex: none;
        width: 2px;
        height: 12px;
        margin: 0 1px 0 0;
        border: dotted #333;
        border-width: 0 1px;
    }

    .grip.mid {
        margin: 0 2px;
    }

    .grip.wide {
        margin: 0 8px;
    }

    .space {
        flex: 1;
    }

    .pale {
        display: flex;
        align-items: center;
        height: 16px;
        color: #777;
        background: #cbcbcb;
    }

    .pale .combo {
        flex: 1;
        height: 16px;
        border: 0;
        background: none;
    }

    .pale .combo::after {
        border-color: #999;
    }

    .w88 {
        flex: none;
        width: 88px;
    }

    .indent select {
        padding-left: 14px;
    }

    .layer {
        flex: none;
        width: 219px;
        padding-left: 2px;
        box-sizing: border-box;
    }

    .layer .icon, .pale > .icon {
        width: 10px;
        height: 10px;
        margin-left: 2px;
    }

    .combo {
        position: relative;
        display: flex;
        box-sizing: border-box;
        width: 100%;
        height: 15px;
        border: 1px solid #b1b1b1;
        background: #e1e1e1;
    }

    .combo::after {
        content: "";
        position: absolute;
        right: 4px;
        top: calc(50% - 4px);
        width: 4px;
        height: 4px;
        border: solid #666;
        border-width: 0 1px 1px 0;
        transform: rotate(45deg);
        pointer-events: none;
    }

    .combo select {
        appearance: none;
        width: 100%;
        padding: 0 2px;
        border: 0;
        background: none;
        opacity: 1;
    }

    .combo.disabled {
        background: #ccc;
        border-color: #bfbfbf;
        color: #777;
    }

    .combo.disabled::after {
        border-color: #999;
    }

    main {
        display: flex;
        flex: 1;
        min-height: 0;
        border-top: 2px solid #454545;
    }

    aside {
        flex: none;
        width: 21px;
        padding-left: 1px;
        box-sizing: border-box;
    }

    .palette {
        display: flex;
        flex-direction: column;
        align-items: center;
        width: 16px;
        padding: 2px 0 1px;
        background: #646464;
        border: 1px solid #444;
    }

    .hgrip {
        width: 11px;
        height: 2px;
        margin-bottom: 1px;
        border: dotted #333;
        border-width: 1px 0;
    }

    .palette .tool .icon {
        width: 12px;
        height: 12px;
    }

    .rightside {
        position: relative;
        width: 24px;
        padding-left: 3px;
        overflow: hidden;
    }

    .meter {
        position: absolute;
        right: 0;
        top: 116px;
        width: 6px;
        height: 42px;
        border: solid #232b3b;
        border-width: 10px 0 4px 3px;
        box-sizing: border-box;
        border-radius: 3px 0 0 3px;
        background: repeating-linear-gradient(transparent 0 2px, #222 2px 3px), linear-gradient(#b58a50, #a8a64c, #2f9a8a);
    }

    .viewport {
        flex: 1;
        display: grid;
        grid-template: 1fr 14px / 1fr 12px;
        min-width: 0;
    }

    .canvas {
        position: relative;
        overflow: hidden;
        background: #000;
    }

    .gridlines {
        position: absolute;
        width: 100%;
        height: 100%;
    }

    .viewlabel {
        position: absolute;
        left: 2px;
        top: 4px;
        color: #e5e5e5;
    }

    .ucsicon {
        position: absolute;
        left: 6px;
        bottom: 4px;
        width: 56px;
        height: 56px;
    }

    .viewcube {
        position: absolute;
        right: 6px;
        top: 5px;
        width: 70px;
        height: 70px;
        color: #999;
    }

    .viewcube span {
        position: absolute;
    }

    .n { left: 30px; top: 2px; }
    .s { left: 30px; bottom: 1px; }
    .w { left: 3px; top: 29px; }
    .e { right: 3px; top: 29px; }

    .ucsname {
        position: absolute;
        right: 20px;
        top: 84px;
        display: flex;
        align-items: center;
        justify-content: space-between;
        width: 42px;
        height: 12px;
        padding-left: 4px;
        border: 1px solid #aaa;
        border-radius: 3px;
        background: #85868e;
        color: #bbb;
        font-size: 8px;
        line-height: 10px;
    }

    .prompt {
        position: absolute;
        right: 187px;
        bottom: 85px;
        display: flex;
        justify-content: space-between;
        width: 64px;
        padding: 0 4px 0 2px;
        line-height: 16px;
        background: #17175f;
        color: #ccccf0;
    }

    .prompt i {
        font-style: normal;
        font-family: "DejaVu Sans";
    }

    .vscroll, .hscroll {
        display: flex;
        flex-direction: column;
        align-items: center;
        background: #f0f0f0;
    }

    .hscroll {
        grid-column: 1 / 3;
        flex-direction: row;
    }

    .vscroll b {
        width: 12px;
        height: 12px;
        margin: 26px 0 auto;
        background: #cdcdcd;
    }

    .hscroll b {
        width: 12px;
        height: 12px;
        margin: 0 0 0 auto;
        background: #cdcdcd;
    }

    .vscroll span, .hscroll span {
        width: 4px;
        height: 4px;
        margin: 5px;
        border: solid #444;
        border-width: 1px 0 0 1px;
    }

    .hscroll .right { margin-right: 17px; }
    .up { transform: rotate(45deg); }
    .down { transform: rotate(225deg); }
    .left { transform: rotate(-45deg); }
    .right { transform: rotate(135deg); }

    .command {
        display: flex;
        height: 42px;
        border-top: 1px solid #555;
        color: #222;
        background: #fff;
        font-size: 10px;
        font-family: "Liberation Mono", "Noto Sans CJK SC", monospace;
    }

    .cmdside {
        display: flex;
        flex-direction: column;
        justify-content: flex-end;
        gap: 4px;
        width: 17px;
        background: linear-gradient(90deg, #777, #4c4c4c);
    }

    .cmdside svg {
        display: block;
        width: 12px;
        height: 12px;
        margin: 0 2px 1px;
    }

    .cmdlines {
        flex: 1;
    }

    p {
        display: flex;
        align-items: center;
        box-sizing: border-box;
        height: 25px;
        margin: 0;
        padding: 8px 2px 0 1px;
        white-space: pre;
    }

    p.active {
        height: 17px;
        padding: 0 4px;
        border-top: 1px solid #888;
    }

    p .icon {
        width: 12px;
    }

    p .caret {
        border-top-color: #888;
    }

    mark {
        border-radius: 3px;
        background: #d2d2d2;
        color: inherit;
    }

    mark + mark {
        margin-left: 4px;
    }

    em {
        font-style: normal;
        color: #2a2ae0;
    }

    .layouts {
        display: flex;
        height: 15px;
        padding-left: 9px;
        background: #383838;
    }

    .layouts button {
        width: 39px;
        height: 13px;
        line-height: 13px;
        color: #aaa;
        background: #555;
        clip-path: polygon(0 0, 100% 0, 82% 100%, 14% 100%);
    }

    .layouts .current {
        width: 36px;
        color: #fff;
        background: #858585;
        font-weight: 700;
    }

    .layouts .add {
        width: 20px;
    }

    footer {
        display: flex;
        align-items: center;
        justify-content: flex-end;
        gap: 1px;
        height: 20px;
        background: #383838;
    }

    .tray, .coords {
        height: 19px;
        line-height: 19px;
        background: #4a4a4a;
    }

    .tray {
        display: flex;
        align-items: center;
        flex: none;
    }

    .end .tool {
        width: 19px;
    }

    .tray .sep {
        height: 19px;
        margin: 0;
        background: #333;
        border: 0;
    }

    .tray .caret {
        margin: 0 3px;
    }

    .coords {
        flex: none;
        box-sizing: border-box;
        width: 136px;
        padding-right: 4px;
        border: 1px solid #666;
        line-height: 17px;
        text-align: right;
        color: #fff;
    }

    .model {
        width: 21px;
    }

    .dim {
        color: #aaa;
        padding-left: 3px;
    }

    .unit {
        width: 41px;
        color: #fff;
        font-weight: 700;
    }

    .taskbar {
        display: flex;
        justify-content: space-between;
        height: 6px;
        padding: 0 54px 0 109px;
        overflow: hidden;
        background: #0b0b0b;
        color: #fff;
    }

    .taskbar b {
        width: 35px;
        background: #333;
    }

    .taskbar span {
        padding-top: 2px;
    }

    .dialog {
        position: absolute;
        left: calc(50% - 180px);
        top: 58px;
        width: 370px;
        box-sizing: border-box;
        border: 1px solid #549bd8;
        background: #f0f0f0;
        color: #111;
        font-family: "Liberation Serif", "Noto Sans CJK SC", serif;
        box-shadow: 0 2px 6px rgba(0, 0, 0, 0.4);
    }

    .dlgtitle {
        display: flex;
        align-items: center;
        gap: 4px;
        height: 22px;
        padding: 0 6px;
        background: #fff;
    }

    .dlgtitle svg {
        width: 11px;
        height: 11px;
    }

    .dlgtitle button {
        margin-left: auto;
    }

    .columns {
        display: grid;
        grid-template-columns: 218px 128px;
        gap: 9px;
        padding-left: 8px;
    }

    .tabs {
        display: flex;
        align-items: flex-end;
        height: 14px;
        padding-top: 8px;
    }

    .tabs button {
        height: 12px;
        padding: 0 2px;
        line-height: 11px;
        border: 1px solid #dcdcdc;
        border-bottom: 0;
    }

    .tabs .selected {
        height: 14px;
        padding: 0 4px;
        background: #fff;
    }

    .page {
        display: flex;
        flex-direction: column;
        gap: 2px;
        padding: 2px 5px 4px 8px;
        border: 1px solid #dcdcdc;
        background: #fff;
    }

    fieldset {
        display: grid;
        align-items: center;
        min-width: 0;
        margin: 0;
        padding: 0 5px;
        border: 1px solid #dcdcdc;
    }

    legend {
        height: 12px;
        padding: 0 1px;
    }

    .off {
        color: #999;
    }

    label {
        display: flex;
        align-items: center;
    }

    u {
        text-underline-offset: 1px;
    }

    .pattern {
        grid-template: repeat(5, 20px) / 83px 79px 1fr;
        padding: 0 0 4px 5px;
    }

    .pattern > :nth-child(2), .pattern > :nth-child(4), .pattern > :nth-child(7), .pattern > :nth-child(10), .pattern > :nth-child(12) {
        grid-column: 1;
    }

    .name select {
        padding-left: 4px;
    }

    .more {
        width: 15px;
        height: 13px;
        margin-left: 1px;
        line-height: 8px;
        border: 1px solid #b5b5b5;
        background: #e1e1e1;
    }

    .more:disabled {
        background: #ccc;
        color: #888;
    }

    .colour, .background {
        display: flex;
        align-items: center;
    }

    .colour .icon, .background .icon {
        z-index: 1;
        width: 9px;
        height: 9px;
        margin: 0 -13px 0 4px;
    }

    .colour select {
        padding-left: 13px;
    }

    .background {
        width: 28px;
        margin-left: 2px;
    }

    .swatch {
        width: 78px;
        height: 17px;
        box-sizing: border-box;
        border: 2px solid #8c8f96;
        border-right-color: #dde;
        border-bottom-color: #dde;
    }

    .angle {
        grid-template: 16px 15px 28px 18px 20px / 83px 79px;
        padding-bottom: 3px;
    }

    .edit {
        width: 68px;
    }

    .edit .combo {
        background: #fff;
        border-color: #777;
    }

    input[type="text"] {
        width: 46px;
        height: 13px;
        padding: 0 2px;
        border: 1px solid #777;
        background: #fff;
    }

    input[type="text"]:disabled {
        border-color: #ccc;
        color: #777;
    }

    input[type="checkbox"], input[type="radio"] {
        appearance: none;
        flex: none;
        width: 10px;
        height: 10px;
        margin-right: 2px;
        border: 1px solid #333;
        background: #fff;
    }

    input[type="radio"] {
        border-radius: 50%;
    }

    input[type="radio"]:checked {
        background: radial-gradient(#222 0 2px, #fff 3px);
    }

    input[type="checkbox"]:disabled {
        border-color: #ccc;
    }

    input[type="checkbox"]:checked::after {
        content: "";
        display: block;
        width: 5px;
        height: 3px;
        margin: 1px;
        border: solid #222;
        border-width: 0 0 1px 1px;
        transform: rotate(-45deg);
    }

    .origin {
        grid-template-columns: 1fr 34px;
        padding: 4px 25px 0 5px;
    }

    .choices {
        display: grid;
        grid-template-rows: 16px 16px 18px 16px 16px 17px;
        align-items: center;
    }

    .setorigin {
        display: flex;
        align-items: center;
        gap: 4px;
        padding-left: 16px;
    }

    .in1 {
        padding-left: 16px;
    }

    .in2 {
        width: 88px;
        padding-left: 38px;
    }

    .in2 select {
        color: #666;
    }

    .bricks {
        width: 34px;
        height: 36px;
        margin-top: 38px;
    }

    .side {
        padding-top: 5px;
    }

    .bounds {
        grid-template-rows: repeat(5, 25px);
        padding: 0 6px 3px;
        margin-bottom: 4px;
    }

    .bounds div, .inherit {
        display: flex;
        align-items: center;
        gap: 8px;
    }

    .bounds button, .inherit button, .setorigin button {
        display: flex;
        align-items: center;
        justify-content: center;
        width: 18px;
        height: 18px;
        border: 1px solid #aaa;
        background: #e6e6e6;
    }

    .bounds button:disabled, .setorigin button:disabled {
        background: #ccc;
        border-color: #c0c0c0;
    }

    .options {
        grid-template-rows: repeat(3, 15px);
        grid-template-columns: minmax(0, 1fr);
        padding: 2px 12px 4px 6px;
        margin-bottom: 7px;
    }

    .over {
        height: 16px;
        padding-top: 1px;
    }

    .slider {
        display: flex;
        align-items: center;
        gap: 7px;
        height: 22px;
    }

    .slider input[type="text"] {
        width: 20px;
        text-align: center;
    }

    input[type="range"] {
        appearance: none;
        flex: 1;
        min-width: 0;
        height: 3px;
        border: 1px solid #d0d0d0;
        background: #e8e8e8;
    }

    input[type="range"]::-webkit-slider-thumb {
        appearance: none;
        width: 4px;
        height: 10px;
        background: #0a78d6;
    }

    .inherit {
        padding-left: 7px;
    }

    .actions {
        display: flex;
        align-items: center;
        gap: 7px;
        height: 29px;
        padding-left: 9px;
    }

    .actions button {
        width: 54px;
        height: 15px;
        line-height: 12px;
        border: 1px solid #adadad;
        background: #e1e1e1;
    }

    .highlight {
        display: flex;
        align-items: center;
        justify-content: center;
        box-sizing: border-box;
        width: 65px;
        height: 28px;
        margin: -4px -5px 0 auto;
        border: 2px solid #fb2c1d;
        border-radius: 2px;
    }

    .actions .ok {
        border: 2px solid #0f76d4;
        outline: 1px dotted #333;
        outline-offset: -3px;
        line-height: 10px;
    }

    .actions .expand {
        width: 16px;
        height: 16px;
        margin-right: 8px;
        border: 0;
        background: none;
    }

    .expand svg {
        display: block;
    }

    .pointer {
        position: absolute;
        left: 215px;
        top: 328px;
        width: 32px;
        height: 52px;
    }

    .watermark {
        position: absolute;
        right: 53px;
        bottom: 24px;
        width: 180px;
        height: 84px;
        color: rgba(255, 255, 255, 0.85);
        font-family: "Liberation Sans", "Noto Sans CJK SC", sans-serif;
        text-shadow: 0 0 2px rgba(0, 0, 0, 0.5);
        pointer-events: none;
    }

    .watermark svg {
        position: absolute;
        left: 62px;
        top: 0;
        width: 56px;
        height: 58px;
        fill: rgba(255, 255, 255, 0.8);
        filter: drop-shadow(0 0 1px rgba(0, 0, 0, 0.5));
    }

    .brand {
        position: relative;
        display: flex;
        align-items: flex-end;
        height: 58px;
        font-size: 39px;
        font-weight: 700;
        line-height: 36px;
    }

    .du {
        width: 56px;
        font-size: 26px;
        line-height: 30px;
        text-align: center;
    }

    .jy {
        font-size: 31px;
    }

    .site {
        position: relative;
        padding-left: 2px;
        font: 20px/24px "Noto Sans", sans-serif;
    }
</style>
